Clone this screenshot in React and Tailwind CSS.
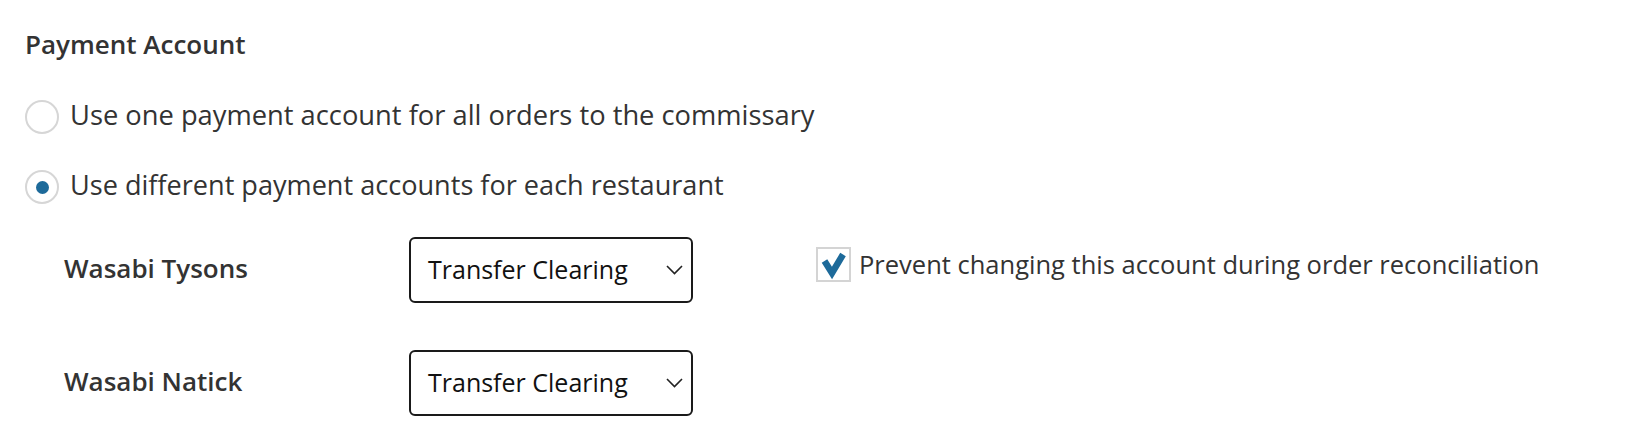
import { useState } from 'react';

const RESTAURANTS = [
  { id: 'tysons', name: 'Wasabi Tysons', account: 'Transfer Clearing', lock: true },
  { id: 'natick', name: 'Wasabi Natick', account: 'Transfer Clearing', lock: false },
];

function Radio({ checked }) {
  return (
    <span className="w-[34px] h-[34px] rounded-full border-2 border-[#d6d6d6] bg-white flex items-center justify-center shrink-0">
      {checked ? <span className="w-[13px] h-[13px] rounded-full bg-[#1d6a9a]" /> : null}
    </span>
  );
}

function Checkbox({ checked }) {
  return (
    <span className="w-[35px] h-[35px] border-2 border-[#d4d4d4] bg-white flex items-center justify-center shrink-0">
      {checked ? (
        <svg width="31" height="31" viewBox="0 0 31 31">
          <polyline points="6.5,12 14,24 25,5.5" fill="none" stroke="#1d6a9a" strokeWidth="6.5" strokeLinejoin="miter" />
        </svg>
      ) : null}
    </span>
  );
}

export default function App() {
  const [mode, setMode] = useState('different');

  return (
    <div className="w-[1628px] h-[448px] bg-white pl-[25px] pt-[26px] text-[#333] font-['Open_Sans',sans-serif]">
      <h2 className="text-[26px] leading-[36px] font-semibold">Payment Account</h2>

      <button
        type="button"
        onClick={() => setMode('one')}
        className="mt-[35px] flex items-center gap-[11px] h-[40px] text-[27.3px] bg-transparent border-0 p-0 cursor-pointer"
      >
        <Radio checked={mode === 'one'} />
        <span className="-mt-[3px]">Use one payment account for all orders to the commissary</span>
      </button>

      <button
        type="button"
        onClick={() => setMode('different')}
        className="mt-[30px] flex items-center gap-[11px] h-[40px] text-[27.1px] bg-transparent border-0 p-0 cursor-pointer"
      >
        <Radio checked={mode === 'different'} />
        <span className="-mt-[3px]">Use different payment accounts for each restaurant</span>
      </button>

      <div className="mt-[30px] pl-[39px] flex flex-col gap-[47px]">
        {RESTAURANTS.map((r) => (
          <div key={r.id} className="flex items-center h-[66px]">
            <span className="w-[345px] text-[26px] font-semibold -mt-[4px]">{r.name}</span>
            <div className="w-[284px] h-[66px] border-2 border-[#1a1a1a] rounded-[6px] flex items-center justify-between pl-[17px] pr-[8px] text-[25px] text-[#111]">
              <span>{r.account}</span>
              <svg width="17" height="10" viewBox="0 0 17 10">
                <polyline points="1,1 8.5,8.5 16,1" fill="none" stroke="#222" strokeWidth="1.6" />
              </svg>
            </div>
            {r.lock ? (
              <div className="ml-[123px] flex items-center gap-[8px] -mt-[12px]">
                <Checkbox checked />
                <span className="text-[25.5px]">Prevent changing this account during order reconciliation</span>
              </div>
            ) : null}
          </div>
        ))}
      </div>
    </div>
  );
}
